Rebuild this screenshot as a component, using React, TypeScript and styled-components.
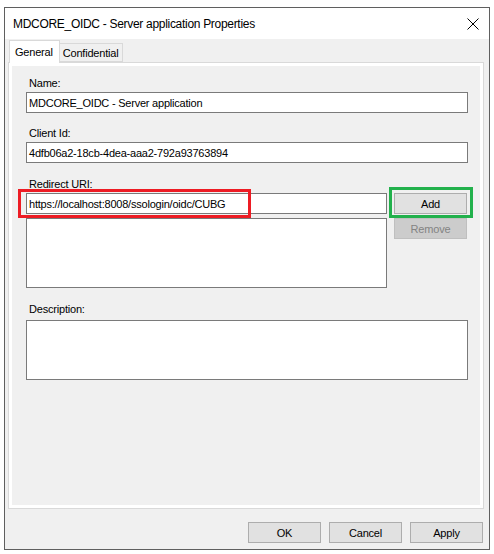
import React from "react";
import styled, { createGlobalStyle } from "styled-components";

const GlobalStyle = createGlobalStyle`
  html, body {
    margin: 0;
    padding: 0;
    background: #ffffff;
  }
  body {
    font-family: "Liberation Sans", Arial, sans-serif;
    font-size: 11px;
    color: #000;
  }
`;

const Window = styled.div`
  box-sizing: border-box;
  width: 486px;
  height: 543px;
  margin: 7px 0 0 4px;
  border: 1px solid #5f5f5f;
  background: #f0f0f0;
  display: flex;
  flex-direction: column;
`;

const TitleBar = styled.div`
  height: 31px;
  background: #ffffff;
  display: flex;
  align-items: center;
  justify-content: space-between;
  padding: 0 8px 0 8px;
  flex-shrink: 0;
`;

const Title = styled.span`
  font-size: 12px;
  letter-spacing: -0.3px;
  color: #000;
`;

const CloseButton = styled.button`
  width: 16px;
  height: 16px;
  padding: 0;
  border: none;
  background: transparent;
  display: flex;
  align-items: center;
  justify-content: center;
`;

const Body = styled.div`
  flex: 1;
  display: flex;
  flex-direction: column;
  padding: 1px 0 0 3px;
`;

const TabRow = styled.div`
  display: flex;
  align-items: flex-end;
  height: 22px;
  padding-left: 1px;
`;

const Tab = styled.div<{ $active?: boolean }>`
  box-sizing: border-box;
  border: 1px solid #d9d9d9;
  border-bottom: ${(p) => (p.$active ? "none" : "1px solid #d9d9d9")};
  background: ${(p) => (p.$active ? "#ffffff" : "#f0f0f0")};
  height: ${(p) => (p.$active ? "23px" : "19px")};
  margin-bottom: ${(p) => (p.$active ? "-1px" : "0")};
  padding: ${(p) => (p.$active ? "4px 6px 0 5px" : "2px 4px 0 3px")};
  margin-left: ${(p) => (p.$active ? "0" : "-1px")};
  position: relative;
  z-index: ${(p) => (p.$active ? 1 : 0)};
  letter-spacing: -0.2px;
  line-height: 14px;
`;

const TabPanel = styled.div`
  box-sizing: border-box;
  width: 476px;
  height: 447px;
  border: 1px solid #d9d9d9;
  background: #ffffff;
  padding: 3px;
`;

const Page = styled.div`
  height: 100%;
  background: #f0f0f0;
  padding: 11px 0 0 14px;
  box-sizing: border-box;
`;

const Field = styled.div<{ $top?: number }>`
  display: flex;
  flex-direction: column;
  margin-top: ${(p) => p.$top ?? 0}px;
  position: relative;
`;

const Label = styled.label<{ $below?: number }>`
  display: block;
  height: 13px;
  line-height: 13px;
  padding-left: 3px;
  margin-bottom: ${(p) => p.$below ?? 2}px;
  letter-spacing: -0.2px;
`;

const TextBox = styled.div<{ $width?: number; $height?: number }>`
  box-sizing: border-box;
  width: ${(p) => p.$width ?? 442}px;
  height: ${(p) => p.$height ?? 21}px;
  border: 1px solid #7a7a7a;
  background: #ffffff;
  padding: 4px 2px 0 2px;
  line-height: 12px;
  letter-spacing: -0.22px;
  white-space: nowrap;
  overflow: hidden;
`;

const UriRow = styled.div`
  display: flex;
  gap: 7px;
`;

const UriColumn = styled.div`
  display: flex;
  flex-direction: column;
  gap: 4px;
  position: relative;
`;

const ButtonColumn = styled.div`
  display: flex;
  flex-direction: column;
  gap: 4px;
  position: relative;
`;

const Button = styled.button<{ $disabled?: boolean }>`
  box-sizing: border-box;
  width: 73px;
  height: 21px;
  padding: 1px 0 0;
  border: 1px solid ${(p) => (p.$disabled ? "#bfbfbf" : "#adadad")};
  background: ${(p) => (p.$disabled ? "#cccccc" : "#e1e1e1")};
  color: ${(p) => (p.$disabled ? "#838383" : "#000000")};
  font-family: "Liberation Sans", Arial, sans-serif;
  font-size: 11px;
  letter-spacing: -0.2px;
  line-height: 13px;
`;

/* coloured frames drawn over the redirect uri inputs */
const Highlight = styled.div<{ $color: string }>`
  position: absolute;
  box-sizing: border-box;
  border: 3px solid ${(p) => p.$color};
  pointer-events: none;
`;

const Footer = styled.div`
  display: flex;
  justify-content: flex-end;
  gap: 8px;
  margin-top: 13px;
  padding-right: 6px;
`;

const CloseIcon = () => (
  <svg width="12" height="12" viewBox="0 0 12 12">
    <path d="M0.5 0.5 L11.5 11.5 M11.5 0.5 L0.5 11.5" stroke="#000" strokeWidth="1" fill="none" />
  </svg>
);

const PropertiesDialog: React.FC = () => {
  return (
    <Window>
      <TitleBar>
        <Title>MDCORE_OIDC - Server application Properties</Title>
        <CloseButton>
          <CloseIcon />
        </CloseButton>
      </TitleBar>
      <Body>
        <TabRow>
          <Tab $active>General</Tab>
          <Tab>Confidential</Tab>
        </TabRow>
        <TabPanel>
          <Page>
            <Field>
              <Label>Name:</Label>
              <TextBox>MDCORE_OIDC - Server application</TextBox>
            </Field>
            <Field $top={14}>
              <Label>Client Id:</Label>
              <TextBox>4dfb06a2-18cb-4dea-aaa2-792a93763894</TextBox>
            </Field>
            <Field $top={15}>
              <Label>Redirect URI:</Label>
              <UriRow>
                <UriColumn>
                  <TextBox $width={361}>https://localhost:8008/ssologin/oidc/CUBG</TextBox>
                  <TextBox $width={361} $height={70} />
                  <Highlight $color="#ed1c24" style={{ left: -8, top: -4, width: 233, height: 29 }} />
                </UriColumn>
                <ButtonColumn>
                  <Button>Add</Button>
                  <Button $disabled>Remove</Button>
                  <Highlight $color="#22b14c" style={{ left: -5, top: -6, width: 84, height: 31 }} />
                </ButtonColumn>
              </UriRow>
            </Field>
            <Field $top={15}>
              <Label $below={4}>Description:</Label>
              <TextBox $height={60} />
            </Field>
          </Page>
        </TabPanel>
        <Footer>
          <Button>OK</Button>
          <Button>Cancel</Button>
          <Button>Apply</Button>
        </Footer>
      </Body>
    </Window>
  );
};

export default function App() {
  return (
    <>
      <GlobalStyle />
      <PropertiesDialog />
    </>
  );
}
